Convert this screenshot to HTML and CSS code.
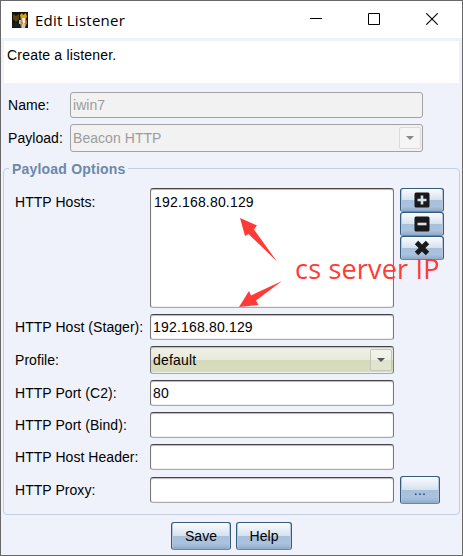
FILE: index.html
```html
<!DOCTYPE html>
<html lang="en">
<head>
<meta charset="utf-8">
<title>Edit Listener</title>
<link rel="stylesheet" href="styles.css">
</head>
<body>
<div class="window">
  <header class="titlebar">
    <svg class="app-icon" width="16" height="16" viewBox="0 0 16 16">
      <rect width="16" height="16" fill="#17130d"/>
      <path d="M1 2l3 2 3-2v5L4 10 1 7z" fill="#5b430c"/>
      <path d="M1 11h6v4H1z" fill="#10251f"/>
      <path d="M8 3l2-2 1 2 3-2 1 4-2 3H9z" fill="#d9a019"/>
      <path d="M9 6h5l1 5-2 5H9l-1-5z" fill="#d9792b"/>
      <path d="M10 6h3v5l-2 1z" fill="#fff0ca"/>
      <path d="M10 12h3v4h-3z" fill="#c9c4c1"/>
      <path d="M7 8h2v4H7z" fill="#b5b9bd"/>
    </svg>
    <h1 class="title">Edit Listener</h1>
    <div class="controls">
      <svg width="12" height="12" viewBox="0 0 12 12"><path d="M0 5.5h12" stroke="#000"/></svg>
      <svg width="12" height="12" viewBox="0 0 12 12"><path d="M.5.5h11v11H.5z" fill="none" stroke="#000"/></svg>
      <svg width="12" height="12" viewBox="0 0 12 12"><path d="M.3.3l11.4 11.4M11.7.3L.3 11.7" stroke="#000" stroke-width="1.1"/></svg>
    </div>
  </header>
  <div class="message">Create a listener.</div>
  <div class="general">
    <span>Name:</span>
    <div class="field disabled">iwin7</div>
    <span>Payload:</span>
    <div class="field combo disabled">Beacon HTTP<span class="arrow"></span></div>
  </div>
  <section class="group">
    <h2 class="legend">Payload Options</h2>
    <div class="options">
      <span class="top">HTTP Hosts:</span>
      <div class="field list">192.168.80.129</div>
      <div class="tools">
        <div class="button"><svg width="16" height="16" viewBox="0 0 16 16"><rect x=".5" y=".5" width="15" height="15" rx="1.5" fill="#191919"/><path d="M8 3.5v9M3.5 8h9" stroke="#d5e2f0" stroke-width="2.6"/></svg></div>
        <div class="button"><svg width="16" height="16" viewBox="0 0 16 16"><rect x=".5" y=".5" width="15" height="15" rx="1.5" fill="#191919"/><path d="M3.5 8h9" stroke="#d5e2f0" stroke-width="2.6"/></svg></div>
        <div class="button"><svg width="16" height="16" viewBox="0 0 16 16"><path d="M2.500 2.500l11 11M13.500 2.500l-11 11" stroke="#191919" stroke-width="4.800"/></svg></div>
      </div>
      <span>HTTP Host (Stager):</span>
      <div class="field">192.168.80.129</div><i></i>
      <span>Profile:</span>
      <div class="field combo profile">default<span class="arrow"></span></div><i></i>
      <span>HTTP Port (C2):</span>
      <div class="field">80</div><i></i>
      <span>HTTP Port (Bind):</span>
      <div class="field"></div><i></i>
      <span>HTTP Host Header:</span>
      <div class="field"></div><i></i>
      <span>HTTP Proxy:</span>
      <div class="field"></div>
      <div class="button browse">...</div>
    </div>
  </section>
  <footer class="actions">
    <div class="button save">Save</div>
    <div class="button help">Help</div>
  </footer>
  <svg class="arrows" width="60" height="100" viewBox="230 210 60 100" fill="#ff3b37">
    <path d="M240 218L257 225.500 254 229.500 277 261.500 248.500 234 245 236z"/>
    <path d="M239 307L249 291 251 295.500 282 281 256 300.500 258.500 305z"/>
  </svg>
  <div class="note">cs server IP</div>
</div>
</body>
</html>
```
FILE: styles.css
```css
* { box-sizing: border-box; }
body {
  margin: 0;
  font: 14px/16px "Liberation Sans", Arial, sans-serif;
  color: #000;
}
.window {
  position: relative;
  display: flex;
  flex-direction: column;
  width: 463px;
  height: 556px;
  border: 1px solid #69696b;
  background: #eff2fa;
  overflow: hidden;
  letter-spacing: .05px;
}
.titlebar {
  display: flex;
  align-items: center;
  flex: none;
  height: 37px;
  padding: 0 24px 0 11px;
  background: #fff;
}
.title {
  margin: 0 0 0 7px;
  font: 15px/20px "Open Sans", "Noto Sans", sans-serif;
  letter-spacing: .25px;
}
.controls { display: flex; gap: 46px; margin-left: auto; }
.controls svg { position: relative; top: -.5px; }
.message {
  flex: none;
  height: 42px;
  margin: 3px 3px 0;
  padding: 6px 3px;
  background: #fff;
  letter-spacing: .2px;
}
.general {
  display: grid;
  grid-template-columns: 62px 353px;
  grid-template-rows: 26px 28px;
  row-gap: 6px;
  align-items: center;
  margin: 9px 0 0 7px;
}
.field {
  display: flex;
  align-items: center;
  height: 26px;
  padding: 0 2px;
  border: 1px solid #aaa;
  border-top: 1px solid #444;
  border-left-color: #777;
  border-right-color: #777;
  border-radius: 3px;
  background: #fff;
  box-shadow: inset 0 1px 1px #bbb, inset 0 -1px #eee;
  letter-spacing: .18px;
}
.field.disabled {
  border-color: #a2a2a4;
  background: #f2f2f2;
  box-shadow: none;
  color: #9c9c9e;
  letter-spacing: .05px;
}
.field.combo { height: 28px; }
.profile {
  background: linear-gradient(#f0f1e7, #e8eadc 50%, #d5dabb 50%, #d8ddbf);
}
.arrow {
  display: flex;
  align-items: center;
  justify-content: center;
  width: 22px;
  height: 22px;
  margin: 0 -1px 0 auto;
  border: 1px solid #c4c6b8;
  border-radius: 2px;
  background: rgba(255, 255, 255, .25);
}
.disabled .arrow { border-color: #dadada; }
.arrow::before {
  content: "";
  border: 4px solid transparent;
  border-top-color: #555;
  border-bottom: 0;
}
.disabled .arrow::before { border-top-color: #888; }
.group {
  flex: none;
  height: 347px;
  margin: 16px 2px 0;
  border: 1px solid #c3cfe0;
  border-radius: 4px;
}
.legend {
  width: max-content;
  margin: -9px 0 0 5px;
  padding: 0 3px;
  font-size: 14px;
  line-height: 18px;
  color: #6b89ab;
  background: #eff2fa;
  letter-spacing: .2px;
}
.options {
  display: grid;
  grid-template-columns: 135px 244px 44px;
  grid-template-rows: 120px 26px 28px 26px 26px 26px 28px;
  row-gap: 6px;
  align-items: center;
  margin: 10px 0 0 11px;
}
.options > :nth-child(3n) { margin-left: 6px; }
.options > span { white-space: nowrap; }
.top { align-self: start; margin-top: 6px; }
.field.list {
  height: 120px;
  align-items: flex-start;
  padding: 5px 3px;
}
.tools { align-self: start; width: 44px; }
.button {
  display: flex;
  align-items: center;
  justify-content: center;
  height: 28px;
  border: 1px solid #335b80;
  border-bottom-color: #6b87a5;
  border-radius: 3px;
  background: linear-gradient(#fbfcfe, #d4e1ef 50%, #a9c0dc 50%, #aac2de 80%, #8eaaca);
  box-shadow: inset 1px 0 #b7c7d9, inset -1px 0 #b7c7d9;
}
.tools .button { height: 24px; }
.browse { width: 40px; color: #335; letter-spacing: .2px; }
.actions {
  display: flex;
  gap: 5px;
  margin: 7px 0 0 170px;
}
.save { width: 60px; }
.help { width: 56px; }
.arrows { position: absolute; left: 229px; top: 209px; }
.note {
  position: absolute;
  left: 294px;
  top: 251px;
  font: 27px/34px "Open Sans", "Noto Sans", sans-serif;
  letter-spacing: .2px;
  color: #ff3b37;
  white-space: nowrap;
}
```
